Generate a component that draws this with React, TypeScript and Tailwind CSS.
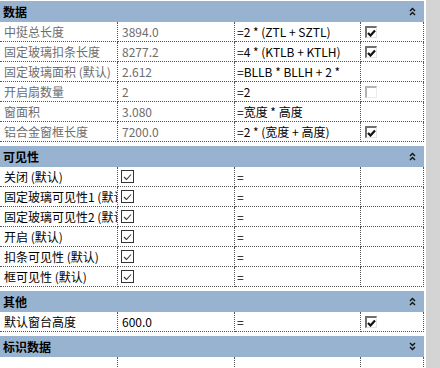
import React from 'react';

type Box = 'on3d' | 'off3d' | 'on' | null;

type Row = {
  label: string;
  value?: string;
  valueBox?: boolean;
  formula?: string;
  box?: Box;
};

type Section = {
  title: string;
  open: boolean;
  muted?: boolean;
  rows: Row[];
};

const sections: Section[] = [
  {
    title: '数据',
    open: true,
    muted: true,
    rows: [
      { label: '中挺总长度', value: '3894.0', formula: '=2 * (ZTL + SZTL)', box: 'on3d' },
      { label: '固定玻璃扣条长度', value: '8277.2', formula: '=4 * (KTLB + KTLH)', box: 'on3d' },
      { label: '固定玻璃面积 (默认)', value: '2.612', formula: '=BLLB * BLLH + 2 *' },
      { label: '开启扇数量', value: '2', formula: '=2', box: 'off3d' },
      { label: '窗面积', value: '3.080', formula: '=宽度 * 高度' },
      { label: '铝合金窗框长度', value: '7200.0', formula: '=2 * (宽度 + 高度)', box: 'on3d' },
    ],
  },
  {
    title: '可见性',
    open: true,
    rows: [
      { label: '关闭 (默认)', valueBox: true, formula: '=' },
      { label: '固定玻璃可见性1 (默认)', valueBox: true, formula: '=' },
      { label: '固定玻璃可见性2 (默认)', valueBox: true, formula: '=' },
      { label: '开启 (默认)', valueBox: true, formula: '=' },
      { label: '扣条可见性 (默认)', valueBox: true, formula: '=' },
      { label: '框可见性 (默认)', valueBox: true, formula: '=' },
    ],
  },
  {
    title: '其他',
    open: true,
    rows: [{ label: '默认窗台高度', value: '600.0', formula: '=', box: 'on3d' }],
  },
  {
    title: '标识数据',
    open: false,
    rows: [{ label: '' }],
  },
];

const Chevrons = ({ up }: { up: boolean }) => (
  <svg width="7" height="9" viewBox="0 0 7 9" className="shrink-0">
    {up ? (
      <g fill="none" stroke="#111" strokeWidth="1.4">
        <polyline points="1,4 3.5,1.5 6,4" />
        <polyline points="1,8 3.5,5.5 6,8" />
      </g>
    ) : (
      <g fill="none" stroke="#111" strokeWidth="1.4">
        <polyline points="1,1 3.5,3.5 6,1" />
        <polyline points="1,5 3.5,7.5 6,5" />
      </g>
    )}
  </svg>
);

const Tick = ({ w = 2 }: { w?: number }) => (
  <svg width="9" height="8" viewBox="0 0 9 8">
    <polyline points="1,4 3.5,6.5 8,1.5" fill="none" stroke="#111" strokeWidth={w} />
  </svg>
);

// old style sunken checkbox (read-only column)
const Box3d = ({ on }: { on: boolean }) => (
  <div
    className={`w-[12px] h-[12px] flex items-center justify-center bg-white border-t-2 border-l-2 border-r border-b ${
      on ? 'border-t-[#707070] border-l-[#707070] border-r-[#e4e4e4] border-b-[#e4e4e4]' : 'border-t-[#b4b4b4] border-l-[#b4b4b4] border-r-[#ececec] border-b-[#ececec]'
    }`}
  >
    {on && <Tick w={2.2} />}
  </div>
);

const FlatBox = () => (
  <div className="w-[13px] h-[13px] border border-[#333] bg-white flex items-center justify-center">
    <svg width="9" height="8" viewBox="0 0 9 8">
      <polyline points="1,4 3.5,6.5 8,1.5" fill="none" stroke="#333" strokeWidth="1.1" />
    </svg>
  </div>
);

const cell = 'h-[20px] border-b border-r border-dotted border-[#555] overflow-hidden whitespace-nowrap flex items-center';

export default function App() {
  return (
    <div
      className="w-[440px] h-[368px] overflow-hidden bg-white flex text-[12px] leading-none"
      style={{ fontFamily: '"Noto Sans CJK SC", "Liberation Sans", sans-serif' }}
    >
      <div className="w-[424px] pt-px">
        {sections.map((s, si) => (
          <div key={s.title}>
            <div className={`h-[21px] bg-[#98b3d0] flex items-center justify-between pl-[3px] pr-[8px] ${si ? 'mt-[4px]' : ''}`}>
              <span className="font-bold text-black">{s.title}</span>
              <Chevrons up={s.open} />
            </div>
            <div className="grid grid-cols-[118px_117px_126px_63px]">
              {s.rows.map((r, ri) => (
                <React.Fragment key={ri}>
                  <div className={`${cell} pl-[4px] ${s.muted ? 'text-[#6d6d6d]' : 'text-black'}`}>{r.label}</div>
                  <div className={`${cell} ${r.valueBox ? 'pl-[3px]' : 'pl-[4px]'} ${s.muted ? 'text-[#6d6d6d]' : 'text-black'}`}>
                    {r.valueBox ? <FlatBox /> : r.value}
                  </div>
                  <div className={`${cell} pl-[2px] text-black`}>{r.formula}</div>
                  <div className={`${cell} pl-[4px] pt-px`}>
                    {r.box === 'on3d' && <Box3d on />}
                    {r.box === 'off3d' && <Box3d on={false} />}
                  </div>
                </React.Fragment>
              ))}
            </div>
          </div>
        ))}
      </div>
      <div className="w-[2px] bg-white" />
      <div className="flex-1 bg-[#d4d4d4]" />
    </div>
  );
}
